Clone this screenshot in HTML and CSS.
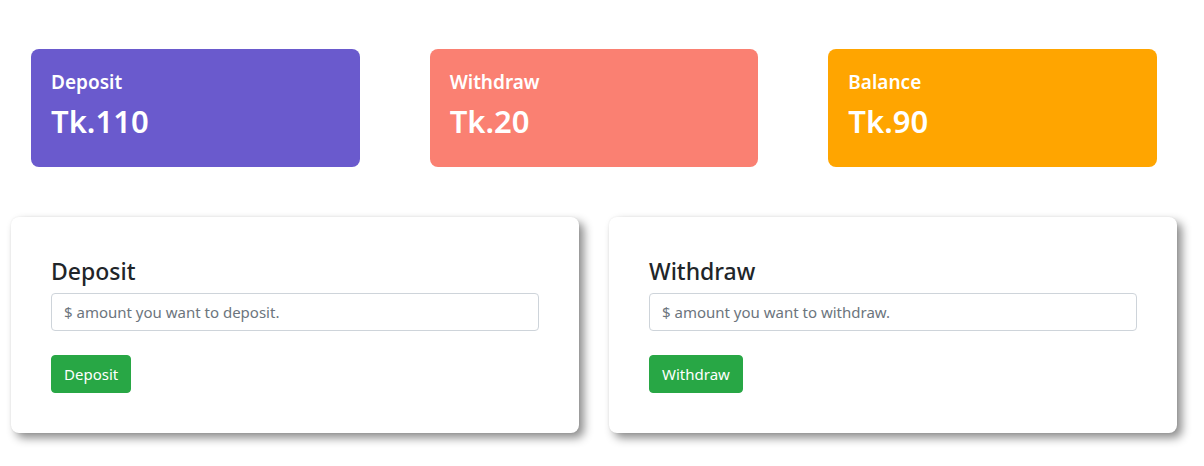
FILE: index.html
```html
<!DOCTYPE html>
<html>
<head>
<meta charset="utf-8">
<link rel="stylesheet" href="styles.css">
</head>
<body>
<div class="stats">
  <div class="stat stat-deposit">
    <h5>Deposit</h5>
    <h2>Tk.110</h2>
  </div>
  <div class="stat stat-withdraw">
    <h5>Withdraw</h5>
    <h2>Tk.20</h2>
  </div>
  <div class="stat stat-balance">
    <h5>Balance</h5>
    <h2>Tk.90</h2>
  </div>
</div>
<div class="forms">
  <div class="panel">
    <h4>Deposit</h4>
    <input class="field" type="text" placeholder="$ amount you want to deposit.">
    <button class="btn">Deposit</button>
  </div>
  <div class="panel">
    <h4>Withdraw</h4>
    <input class="field" type="text" placeholder="$ amount you want to withdraw.">
    <button class="btn">Withdraw</button>
  </div>
</div>
</body>
</html>
```
FILE: styles.css
```css
* { box-sizing: border-box; }
body {
  margin: 0;
  background: #fff;
  font-family: "Noto Sans", "Open Sans", sans-serif;
  color: #212529;
}
.stats {
  display: flex;
  gap: 70px;
  padding: 49px 0 0 31px;
  width: 1157px;
}
.stat {
  flex: 1;
  border-radius: 8px;
  padding: 21px 20px 19px;
  color: #fff;
}
.stat h5 {
  margin: 0 0 8px;
  font-size: 19px;
  font-weight: 600;
  line-height: 24px;
}
.stat h2 {
  margin: 0 0 8px;
  font-size: 31px;
  font-weight: 600;
  line-height: 38px;
}
.stat-deposit { background: #6a5acd; }
.stat-withdraw { background: #fa8072; }
.stat-balance { background: #ffa500; }
.forms {
  display: flex;
  gap: 30px;
  padding: 50px 0 33px 11px;
  width: 1177px;
}
.panel {
  flex: 1;
  background: #fff;
  border-radius: 8px;
  padding: 40px 40px 40px;
  box-shadow: 5px 5px 10px rgba(0,0,0,0.45), 0 0 2px rgba(0,0,0,0.08);
  display: flex;
  flex-direction: column;
  align-items: flex-start;
}
.panel h4 {
  margin: 0 0 7px;
  font-size: 23px;
  font-weight: 500;
  line-height: 29px;
}
.field {
  width: 100%;
  height: 38px;
  border: 1px solid #ced4da;
  border-radius: 4px;
  padding: 6px 12px;
  font-family: inherit;
  font-size: 15px;
  color: #495057;
  margin-bottom: 24px;
}
.field::placeholder { color: #6c757d; }
.btn {
  height: 38px;
  background: #28a745;
  color: #fff;
  border: 1px solid #28a745;
  border-radius: 4px;
  padding: 6px 12px;
  font-family: inherit;
  font-size: 15px;
}
```
